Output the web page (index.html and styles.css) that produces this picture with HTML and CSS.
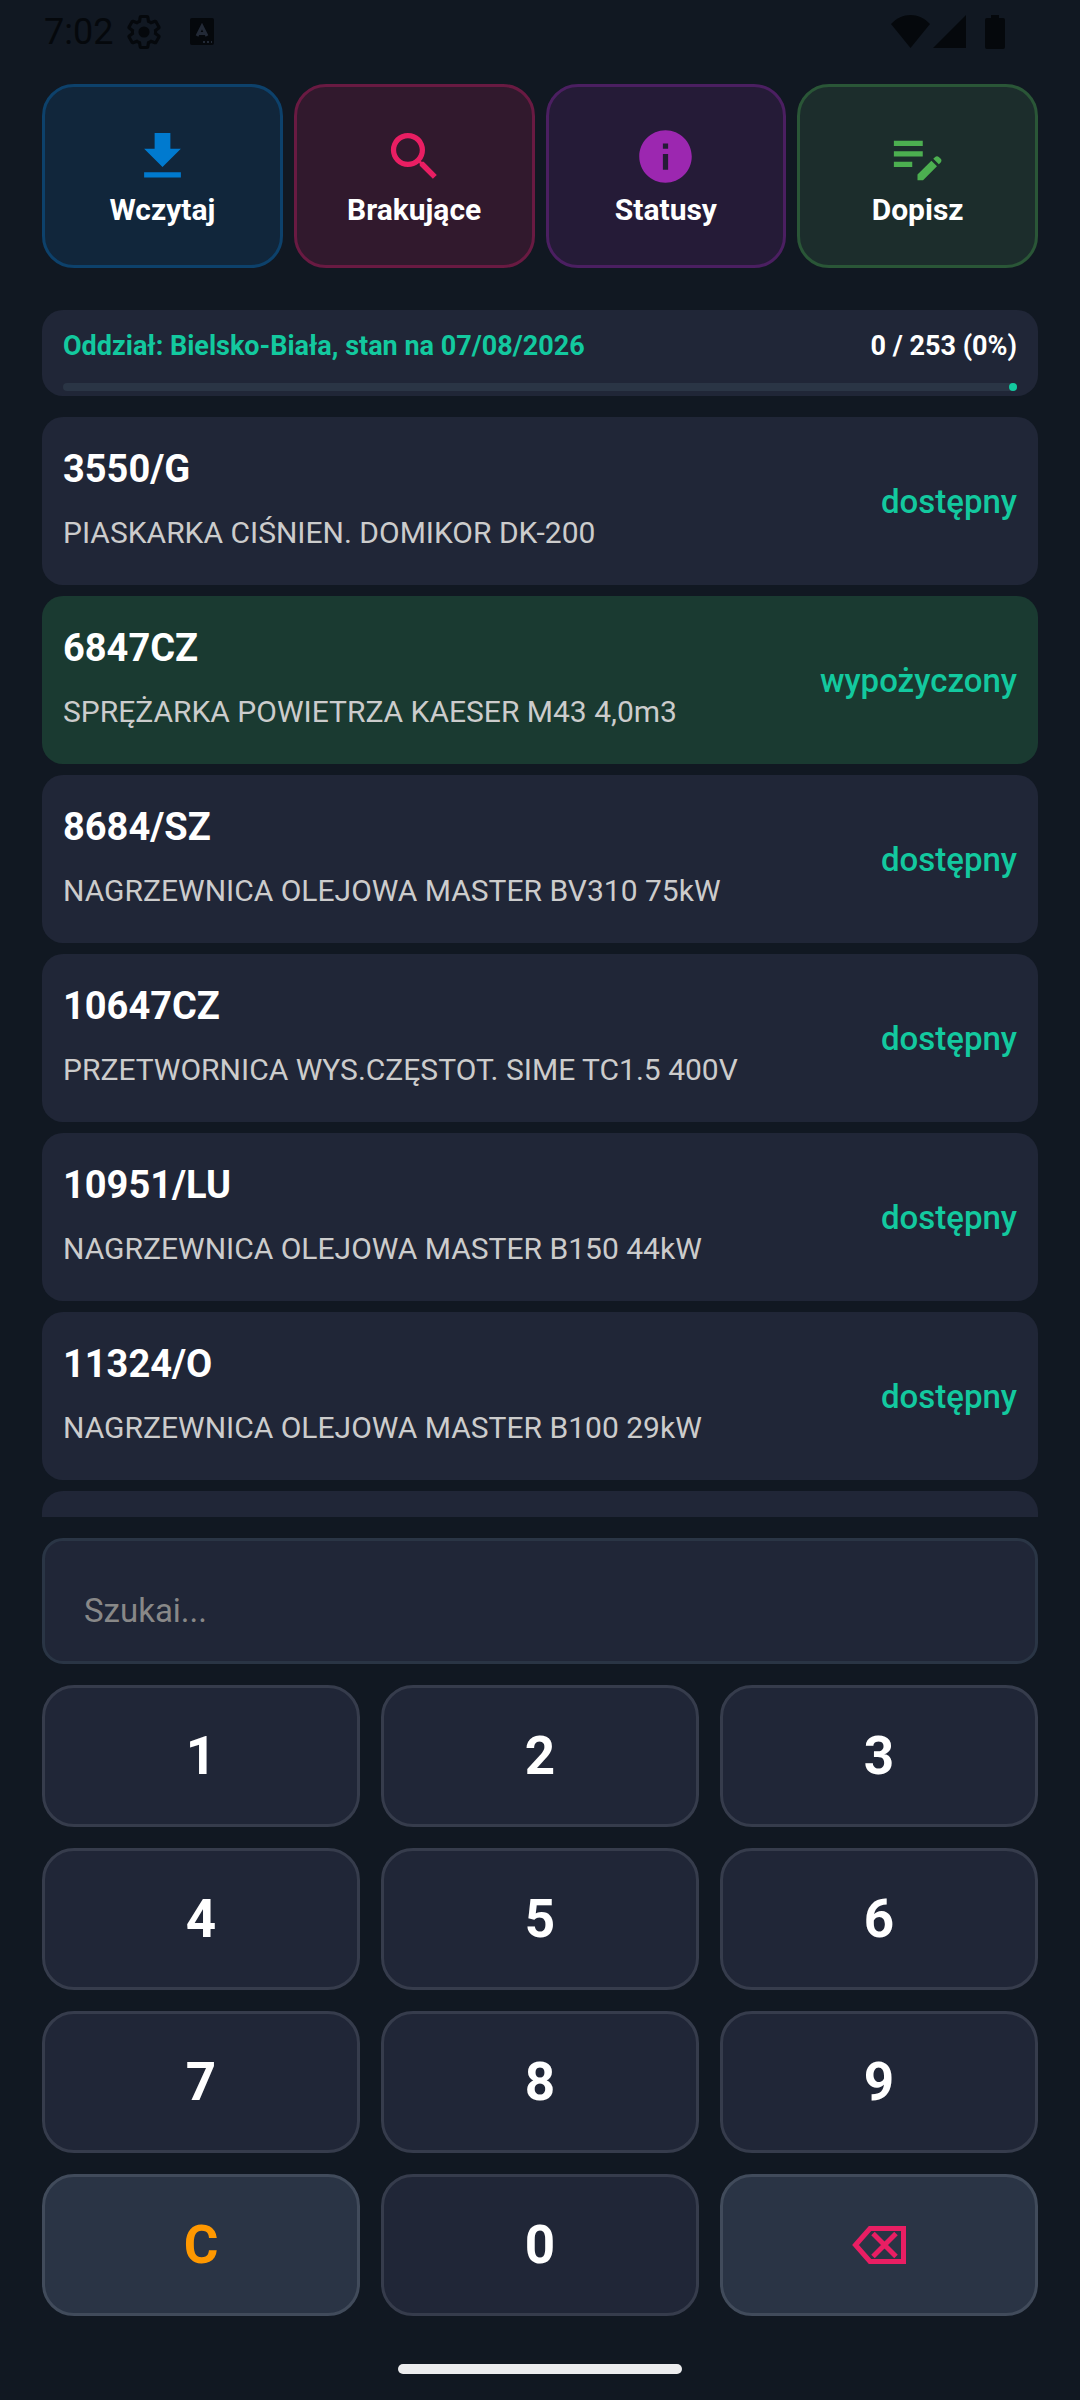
FILE: index.html
```html
<!DOCTYPE html>
<html lang="pl">

<head>
    <meta charset="UTF-8">
    <meta name="viewport" content="width=device-width, initial-scale=1.0">
    <title>Inwentaryzacja</title>
    <link rel="stylesheet" href="styles.css">
</head>

<body>
    <div class="status-bar">
        <div class="status-left">
            <span class="clock">7:02</span>
            <svg class="gear-icon" viewBox="1 1 22 22" aria-hidden="true">
                <path class="gear-ring" d="M19.430 12.980c.04-.32.07-.64.07-.98 0-.34-.03-.66-.07-.98l2.110-1.650c.19-.15.24-.42.12-.64l-2-3.460c-.09-.16-.26-.25-.44-.25-.06 0-.12.01-.17.03l-2.490 1c-.52-.4-1.080-.73-1.690-.98l-.38-2.650C14.460 2.180 14.250 2 14 2h-4c-.25 0-.46.18-.49.42l-.38 2.650c-.61.25-1.170.59-1.690.98l-2.490-1c-.06-.02-.12-.03-.18-.03-.17 0-.34.09-.43.25l-2 3.460c-.13.22-.07.49.12.64l2.110 1.650c-.04.32-.07.65-.07.98 0 .33.03.66.07.98l-2.110 1.650c-.19.15-.24.42-.12.64l2 3.460c.09.16.26.25.44.25.06 0 .12-.01.17-.03l2.490-1c.52.4 1.080.73 1.690.98l.38 2.650c.03.24.24.42.49.42h4c.25 0 .46-.18.49-.42l.38-2.650c.61-.25 1.170-.59 1.690-.98l2.490 1c.06.02.12.03.18.03.17 0 .34-.09.43-.25l2-3.460c.12-.22.07-.49-.12-.64l-2.110-1.650z"/>
                <circle cx="12" cy="12" r="3.6"/>
            </svg>
            <svg class="input-icon" viewBox="0 0 24 27" aria-hidden="true">
                <rect width="24" height="27" rx="2"/>
                <path class="input-mark" d="M7 18l5-10 5 10M9 15.500h6"/>
                <path class="input-dots" d="M13 24h2M17 24h2M21 24h1"/>
            </svg>
        </div>
        <div class="status-right">
            <svg class="wifi-icon" viewBox="0 0 39 33" aria-hidden="true"><path d="M0 9C11-3 28-3 39 9L19.500 33z"/></svg>
            <svg class="signal-icon" viewBox="0 0 33 33" aria-hidden="true"><path d="M33 0v33H0z"/></svg>
            <svg class="battery-icon" viewBox="0 0 20 34" aria-hidden="true"><path d="M6 0h8v3h4q2 0 2 2v27q0 2-2 2H2q-2 0-2-2V5q0-2 2-2h4z"/></svg>
        </div>
    </div>

    <main>
        <nav class="actions">
            <button type="button" class="action action-load">
                <svg viewBox="0 0 24 24" aria-hidden="true"><path d="M19 9h-4V3H9v6H5l7 7 7-7zM5 18v2h14v-2H5z"/></svg>
                Wczytaj
            </button>
            <button type="button" class="action action-missing">
                <svg viewBox="0 0 24 24" aria-hidden="true"><path d="M15.500 14h-.79l-.28-.27A6.471 6.471 0 0 0 16 9.500 6.500 6.500 0 1 0 9.500 16c1.610 0 3.090-.59 4.230-1.570l.27.28v.79l5 4.990L20.490 19l-4.990-5zm-6 0C7.010 14 5 11.990 5 9.500S7.010 5 9.500 5 14 7.010 14 9.500 11.990 14 9.500 14z"/></svg>
                Brakujące
            </button>
            <button type="button" class="action action-statuses">
                <svg viewBox="0 0 24 24" aria-hidden="true"><path d="M12 2C6.480 2 2 6.480 2 12s4.480 10 10 10 10-4.480 10-10S17.520 2 12 2zm1 15h-2v-6h2v6zm0-8h-2V7h2v2z"/></svg>
                Statusy
            </button>
            <button type="button" class="action action-add">
                <svg viewBox="0 0 24 24" aria-hidden="true"><path d="M3 10h11v2H3v-2zm0-2h11V6H3v2zm0 8h7v-2H3v2zm15.010-3.130l.71-.71c.39-.39 1.020-.39 1.410 0l.71.71c.39.39.39 1.020 0 1.410l-.71.71-2.120-2.120zm-.71.71l-5.300 5.300V21h2.120l5.300-5.300-2.120-2.120z"/></svg>
                Dopisz
            </button>
        </nav>

        <section class="summary">
            <div class="summary-row">
                <span class="branch">Oddział: Bielsko-Biała, stan na 07/08/2026</span>
                <span class="count">0 / 253 (0%)</span>
            </div>
            <div class="progress"></div>
        </section>

        <ul class="items">
            <li class="item">
                <div class="item-info">
                    <h2>3550/G</h2>
                    <p>PIASKARKA CIŚNIEN. DOMIKOR DK-200</p>
                </div>
                <span class="item-status">dostępny</span>
            </li>
            <li class="item item-rented">
                <div class="item-info">
                    <h2>6847CZ</h2>
                    <p>SPRĘŻARKA POWIETRZA KAESER M43 4,0m3</p>
                </div>
                <span class="item-status">wypożyczony</span>
            </li>
            <li class="item">
                <div class="item-info">
                    <h2>8684/SZ</h2>
                    <p>NAGRZEWNICA OLEJOWA MASTER BV310 75kW</p>
                </div>
                <span class="item-status">dostępny</span>
            </li>
            <li class="item">
                <div class="item-info">
                    <h2>10647CZ</h2>
                    <p>PRZETWORNICA WYS.CZĘSTOT. SIME TC1.5 400V</p>
                </div>
                <span class="item-status">dostępny</span>
            </li>
            <li class="item">
                <div class="item-info">
                    <h2>10951/LU</h2>
                    <p>NAGRZEWNICA OLEJOWA MASTER B150 44kW</p>
                </div>
                <span class="item-status">dostępny</span>
            </li>
            <li class="item">
                <div class="item-info">
                    <h2>11324/O</h2>
                    <p>NAGRZEWNICA OLEJOWA MASTER B100 29kW</p>
                </div>
                <span class="item-status">dostępny</span>
            </li>
            <li class="item"></li>
        </ul>

        <input type="text" class="search" placeholder="Szukai..." aria-label="Szukaj">

        <div class="keypad">
            <button type="button" class="key">1</button>
            <button type="button" class="key">2</button>
            <button type="button" class="key">3</button>
            <button type="button" class="key">4</button>
            <button type="button" class="key">5</button>
            <button type="button" class="key">6</button>
            <button type="button" class="key">7</button>
            <button type="button" class="key">8</button>
            <button type="button" class="key">9</button>
            <button type="button" class="key key-alt key-clear">C</button>
            <button type="button" class="key">0</button>
            <button type="button" class="key key-alt key-delete" aria-label="Usuń">
                <svg viewBox="0 0 54 38" aria-hidden="true">
                    <path d="M3.500 19L18 2.500h33.500v33H18z"/>
                    <path d="M21 7.500l23 23M44 7.500l-23 23"/>
                </svg>
            </button>
        </div>
    </main>

    <div class="home-bar"></div>
</body>

</html>
```

FILE: styles.css
```css
/* General Reset */
* {
    margin: 0;
    padding: 0;
    box-sizing: border-box;
}

:root {
    --background-color: #111822;
    --card-bg: #202637;
    --rented-bg: #1a3a31;
    --muted-bg: #2a3545;
    --accent-color: #13c99f;
    --text-color: #fff;
    --system-color: #05080c;
}

body {
    display: flex;
    flex-direction: column;
    height: 100vh;
    font-family: Roboto, sans-serif;
    background-color: var(--background-color);
    color: var(--text-color);
}

button,
input {
    font-family: inherit;
    color: inherit;
}

/* System status bar */
.status-bar {
    display: flex;
    justify-content: space-between;
    align-items: center;
    height: 63px;
    padding: 0 75px 0 44px;
    color: var(--system-color);
    fill: var(--system-color);
}

.status-left,
.status-right {
    display: flex;
    align-items: center;
}

.clock {
    margin-right: 14px;
    font-size: 36px;
    line-height: 42px;
}

.gear-icon {
    width: 34px;
    height: 34px;
    margin-right: 29px;
}

.gear-ring {
    fill: none;
    stroke: var(--system-color);
    stroke-width: 2;
}

.input-icon {
    width: 24px;
    height: 27px;
}

.input-mark,
.input-dots {
    fill: none;
    stroke: #222936;
    stroke-width: 3;
}

.input-dots {
    stroke-width: 2;
}

.wifi-icon {
    width: 39px;
    height: 33px;
    margin-right: 3px;
}

.signal-icon {
    width: 33px;
    height: 33px;
    margin-right: 19px;
}

.battery-icon {
    width: 20px;
    height: 34px;
}

main {
    flex: 1;
    display: flex;
    flex-direction: column;
    gap: 21px;
    min-height: 0;
    padding: 21px 42px 0;
}

/* Top actions */
.actions {
    display: grid;
    grid-template-columns: repeat(4, 1fr);
    gap: 11px;
    margin-bottom: 21px;
}

.action {
    display: flex;
    flex-direction: column;
    align-items: center;
    justify-content: center;
    gap: 5px;
    height: 184px;
    border: 3px solid;
    border-radius: 32px;
    font-size: 30px;
    font-weight: 700;
    line-height: 34px;
    cursor: pointer;
}

.action svg {
    width: 63px;
    height: 63px;
}

.action-load {
    background-color: #11263b;
    border-color: #0d416b;
    fill: #007acf;
}

.action-missing {
    background-color: #31192d;
    border-color: #691a42;
    fill: #e91e63;
}

.action-statuses {
    background-color: #251b37;
    border-color: #4b1f61;
    fill: #9c27b0;
}

.action-add {
    background-color: #1c2d2c;
    border-color: #2a5637;
    fill: #4caf50;
}

/* Progress summary */
.summary {
    padding: 5px 21px;
    background-color: var(--card-bg);
    border-radius: 21px;
}

.summary-row {
    display: flex;
    justify-content: space-between;
    margin-bottom: 5px;
    font-size: 27px;
    font-weight: 700;
    line-height: 63px;
}

.branch {
    color: var(--accent-color);
}

.progress {
    display: flex;
    justify-content: flex-end;
    height: 8px;
    background-color: var(--muted-bg);
    border-radius: 4px;
}

.progress::after {
    content: "";
    width: 8px;
    background-color: var(--accent-color);
    border-radius: 50%;
}

/* Equipment list */
.items {
    flex: 1;
    display: flex;
    flex-direction: column;
    gap: 11px;
    min-height: 0;
    overflow: hidden;
    list-style: none;
}

.item {
    flex: none;
    display: flex;
    justify-content: space-between;
    align-items: center;
    min-height: 168px;
    padding: 21px;
    background-color: var(--card-bg);
    border-radius: 21px;
}

.item-rented {
    background-color: var(--rented-bg);
}

.item-info h2 {
    font-size: 38px;
    font-weight: 700;
    line-height: 63px;
}

.item-info p {
    font-size: 30px;
    line-height: 63px;
    color: #ccc;
}

.item-status {
    font-size: 33px;
    font-weight: 500;
    color: var(--accent-color);
}

/* Search and keypad */
.search {
    width: 100%;
    height: 126px;
    padding: 19px 39px 0;
    background-color: var(--card-bg);
    border: 3px solid var(--muted-bg);
    border-radius: 21px;
    font-size: 33px;
}

.search::placeholder {
    color: #888;
}

.keypad {
    display: grid;
    grid-template-columns: repeat(3, 1fr);
    gap: 21px;
}

.key {
    display: flex;
    align-items: center;
    justify-content: center;
    height: 142px;
    background-color: var(--card-bg);
    border: 3px solid #363c4c;
    border-radius: 32px;
    font-size: 53px;
    font-weight: 700;
    cursor: pointer;
}

.key-alt {
    background-color: #2a3445;
    border-color: #414b5b;
}

.key-clear {
    color: #ff9800;
}

.key-delete svg {
    width: 54px;
    height: 38px;
    fill: none;
    stroke: #e91e63;
    stroke-width: 5;
}

.home-bar {
    width: 284px;
    height: 10px;
    margin: 48px auto 26px;
    background-color: #ececee;
    border-radius: 5px;
}
```
